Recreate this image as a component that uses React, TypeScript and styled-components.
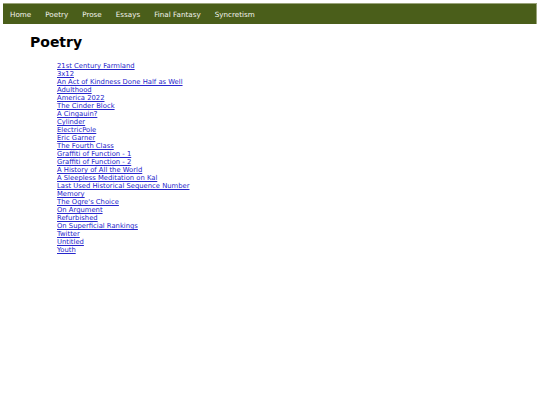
import styled, { createGlobalStyle } from 'styled-components';

const GlobalStyle = createGlobalStyle`
  body {
    margin: 0;
    background: #fff;
    font-family: "DejaVu Sans", Verdana, sans-serif;
  }
`;

const Page = styled.div`
  padding: 3px 3px 0 3px;
`;

const NavBar = styled.nav`
  display: flex;
  align-items: center;
  gap: 14px;
  height: 21px;
  padding: 0 7px;
  background: #4a5e1a;
  border-top: 1px solid #9aa47a;
  border-right: 1px solid #9aa47a;
  box-sizing: border-box;
`;

const NavLink = styled.a`
  color: #f4f4ee;
  font-size: 7.2px;
  text-decoration: none;
`;

const Main = styled.main`
  padding: 10px 0 0 27px;
`;

const Title = styled.h1`
  margin: 0;
  font-size: 14px;
  line-height: 17px;
  font-weight: bold;
  color: #000;
`;

const PoemList = styled.ul`
  list-style: none;
  margin: 11px 0 0 0;
  padding: 0 0 0 27px;
`;

const PoemItem = styled.li`
  font-size: 6.8px;
  line-height: 8px;
`;

const PoemLink = styled.a`
  color: #2626cc;
  text-decoration: underline;
`;

const sections = ['Home', 'Poetry', 'Prose', 'Essays', 'Final Fantasy', 'Syncretism'];

const poems = [
  '21st Century Farmland',
  '3x12',
  'An Act of Kindness Done Half as Well',
  'Adulthood',
  'America 2022',
  'The Cinder Block',
  'A Cingauin?',
  'Cylinder',
  'ElectricPole',
  'Eric Garner',
  'The Fourth Class',
  'Graffiti of Function - 1',
  'Graffiti of Function - 2',
  'A History of All the World',
  'A Sleepless Meditation on Kal',
  'Last Used Historical Sequence Number',
  'Memory',
  "The Ogre's Choice",
  'On Argument',
  'Refurbished',
  'On Superficial Rankings',
  'Twitter',
  'Untitled',
  'Youth',
];

export default function App() {
  return (
    <Page>
      <GlobalStyle />
      <NavBar>
        {sections.map(s => (
          <NavLink key={s} href="#">
            {s}
          </NavLink>
        ))}
      </NavBar>
      <Main>
        <Title>Poetry</Title>
        <PoemList>
          {poems.map(p => (
            <PoemItem key={p}>
              <PoemLink href="#">{p}</PoemLink>
            </PoemItem>
          ))}
        </PoemList>
      </Main>
    </Page>
  );
}
